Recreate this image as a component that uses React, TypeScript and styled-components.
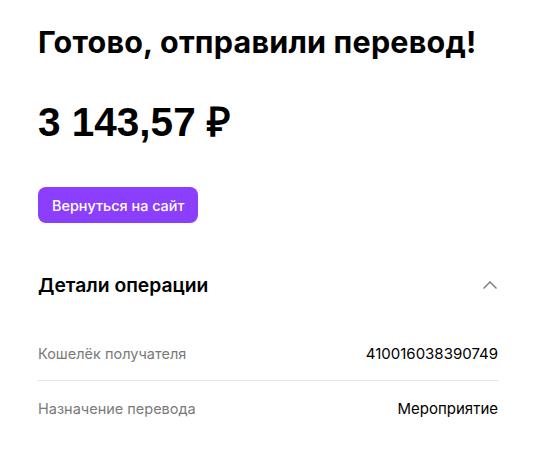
import React from "react";
import styled, { createGlobalStyle } from "styled-components";

const Global = createGlobalStyle`
  body { margin: 0; background: #fff; font-family: Inter, "Noto Sans", sans-serif; color: #000; }
`;

const Page = styled.div`
  width: 460px;
  padding: 22px 0 0 38px;
  display: flex;
  flex-direction: column;
`;

const Title = styled.h1`
  margin: 0;
  font-size: 30.5px;
  line-height: 40px;
  font-weight: 700;
  letter-spacing: 0.2px;
`;

const Amount = styled.div`
  margin-top: 36px;
  font-family: "Liberation Sans", Arial, sans-serif;
  font-size: 40.5px;
  line-height: 48px;
  font-weight: 700;
`;

const Button = styled.button`
  margin-top: 41px;
  align-self: flex-start;
  height: 36px;
  padding: 0 14px;
  border: none;
  border-radius: 8px;
  background: #8b3ffd;
  color: #fff;
  font-family: Inter, sans-serif;
  font-size: 14.4px;
  font-weight: 500;
`;

const SectionHead = styled.div`
  margin-top: 48px;
  display: flex;
  align-items: center;
  justify-content: space-between;
  height: 28px;
`;

const SectionTitle = styled.h2`
  margin: 0;
  font-size: 19.3px;
  font-weight: 600;
`;

const Rows = styled.div`
  margin-top: 27px;
  display: flex;
  flex-direction: column;
`;

const Row = styled.div<{ $divider?: boolean }>`
  display: flex;
  justify-content: space-between;
  align-items: center;
  height: 54px;
  border-bottom: ${(p) => (p.$divider ? "1px solid #e6e6e6" : "none")};
`;

const Label = styled.span`
  color: #7a7a7a;
  font-size: 14.5px;
`;

const Value = styled.span`
  color: #000;
  font-size: 15px;
`;

export default function App() {
  return (
    <>
      <Global />
      <Page>
        <Title>Готово, отправили перевод!</Title>
        <Amount>3 143,57 ₽</Amount>
        <Button>Вернуться на сайт</Button>
        <SectionHead>
          <SectionTitle>Детали операции</SectionTitle>
          <svg width="16" height="10" viewBox="0 0 16 10" fill="none">
            <path d="M1.5 8.5 L8 2 L14.5 8.5" stroke="#777" strokeWidth="1.4" />
          </svg>
        </SectionHead>
        <Rows>
          <Row $divider>
            <Label>Кошелёк получателя</Label>
            <Value>410016038390749</Value>
          </Row>
          <Row>
            <Label>Назначение перевода</Label>
            <Value>Мероприятие</Value>
          </Row>
        </Rows>
      </Page>
    </>
  );
}
